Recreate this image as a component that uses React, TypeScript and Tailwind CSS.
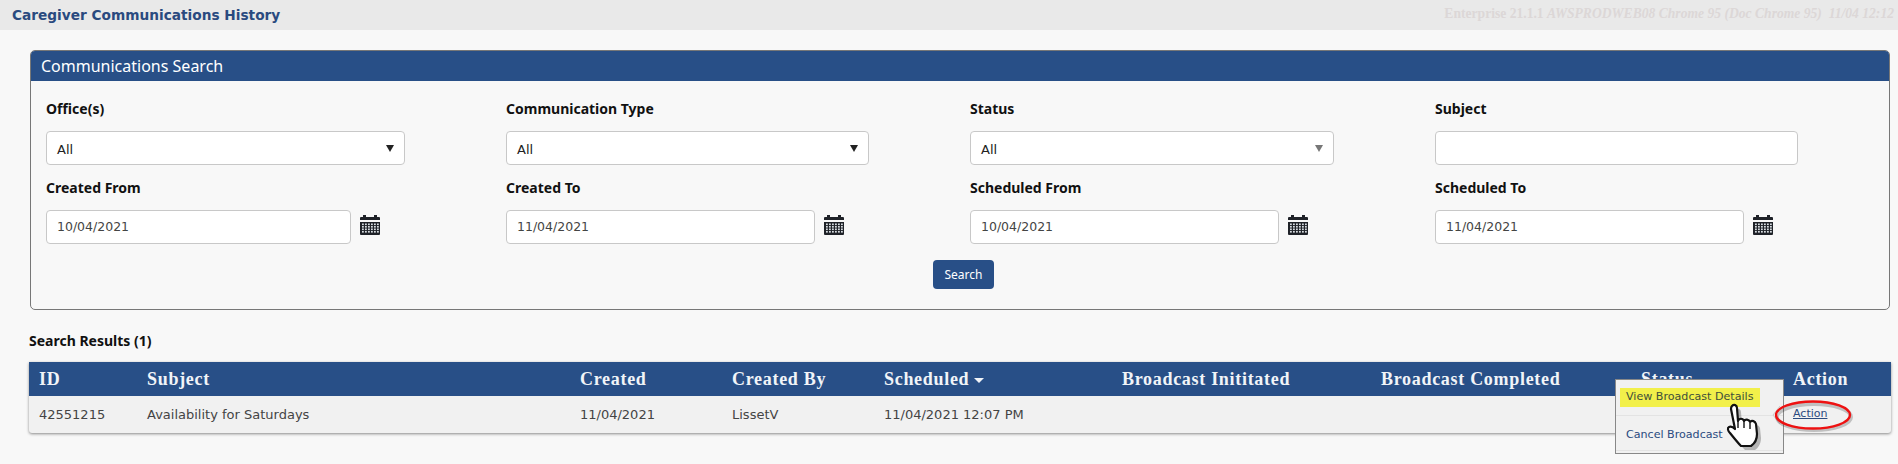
const bodyFont = "font-['DejaVu_Sans',sans-serif]";

const CalendarIcon = () => (
    <svg width="20" height="20" viewBox="0 0 20 20" className="ml-[9px] mt-[5px] shrink-0">
        <rect x="0" y="2" width="20" height="18" rx="1" fill="#1f2228" />
        <rect x="3" y="0" width="3" height="4" fill="#1f2228" />
        <rect x="14" y="0" width="3" height="4" fill="#1f2228" />
        <rect x="0" y="5" width="20" height="2" fill="#f8f8f8" />
        <g fill="#d8dde2">
            {[8.5, 11, 13.5, 16].map((y) =>
                [2, 5, 8, 11, 14, 17].map((x) => (
                    <rect key={`${x}-${y}`} x={x} y={y} width="1.8" height="1.6" />
                ))
            )}
        </g>
    </svg>
);

const Label = ({ text, className }: { text: string; className: string }) => (
    <div className={`font-['Noto_Sans',sans-serif] text-[14px] font-bold leading-[20px] text-[#111] ${className}`}>
        {text}
    </div>
);

const SelectBox = ({ width, arrowColor }: { width: string; arrowColor: string }) => (
    <div className={`flex h-[34px] items-center justify-between rounded-[4px] border border-[#c8c8c8] bg-white pl-[10px] pr-[10px] ${width}`}>
        <span className={`${bodyFont} pt-[3px] text-[13px] text-[#222]`}>All</span>
        <span className={`h-0 w-0 border-x-[4px] border-t-[7px] border-x-transparent ${arrowColor}`} />
    </div>
);

const DateBox = ({ value, width }: { value: string; width: string }) => (
    <div className="flex">
        <div className={`${bodyFont} flex h-[34px] items-center rounded-[4px] border border-[#c8c8c8] bg-white pl-[10px] text-[12.5px] text-[#444] ${width}`}>
            {value}
        </div>
        <CalendarIcon />
    </div>
);

const columns = [
    { title: "ID", width: "w-[108px]" },
    { title: "Subject", width: "w-[433px]" },
    { title: "Created", width: "w-[152px]" },
    { title: "Created By", width: "w-[152px]" },
    { title: "Scheduled", width: "w-[238px]", sorted: true },
    { title: "Broadcast Inititated", width: "w-[259px]" },
    { title: "Broadcast Completed", width: "w-[260px]" },
    { title: "Status", width: "w-[152px]" },
    { title: "Action", width: "" },
];

const rowCells = ["42551215", "Availability for Saturdays", "11/04/2021", "LissetV", "11/04/2021 12:07 PM", "", "", ""];

const HandCursor = () => (
    <svg width="44" height="50" viewBox="0 0 44 50" className="absolute left-[1722px] top-[403px]">
        <path
            d="M10 3c2-2 5-1 5 2l1 13c1-3 5-3 6 0 1-2 5-2 6 1 2-2 5-1 6 2l1 10c0 6-3 10-6 12H19c-3-3-7-8-11-13-2-2-3-5-1-6s4 0 6 2L9 6c0-1 0-2 1-3z"
            fill="#000"
            opacity="0.25"
            transform="translate(4 4)"
        />
        <path
            d="M10 3c2-2 5-1 5 2l1 13c1-3 5-3 6 0 1-2 5-2 6 1 2-2 5-1 6 2l1 10c0 6-3 10-6 12H19c-3-3-7-8-11-13-2-2-3-5-1-6s4 0 6 2L9 6c0-1 0-2 1-3z"
            fill="#fff"
            stroke="#111"
            strokeWidth="2.2"
            strokeLinejoin="round"
        />
        <path d="M16 18v7M22 18v7M28 20v6" stroke="#111" strokeWidth="1.4" fill="none" />
    </svg>
);

const App = () => {
    return (
        <div className="relative h-[464px] w-[1898px] overflow-hidden bg-[#f8f8f8]">
            <div className="flex h-[30px] items-center justify-between bg-[#e9e9e9] pl-[12px] pr-[4px]">
                <h1 className="font-['DejaVu_Sans',sans-serif] text-[13.7px] font-bold text-[#2a4a7f]">
                    Caregiver Communications History
                </h1>
                <div className="mb-[1px] whitespace-pre font-['Liberation_Serif',serif] text-[13.6px] font-bold text-[#dcd7d7]">
                    Enterprise 21.1.1 <span className="italic">AWSPRODWEB08 Chrome 95 (Doc Chrome 95)  11/04 12:12</span>
                </div>
            </div>

            <div className="ml-[30px] mt-[20px] h-[260px] w-[1860px] overflow-hidden rounded-[5px] border border-[#777]">
                <div className="flex h-[30px] items-center bg-[#284f87] pl-[10px] font-['Noto_Sans',sans-serif] text-[16px] text-white">
                    Communications Search
                </div>
                <div className="grid grid-cols-[460px_464px_465px_1fr] pl-[15px]">
                    <div>
                        <Label text="Office(s)" className="mt-[18px]" />
                        <div className="mt-[12px]"><SelectBox width="w-[359px]" arrowColor="border-t-[#222]" /></div>
                    </div>
                    <div>
                        <Label text="Communication Type" className="mt-[18px]" />
                        <div className="mt-[12px]"><SelectBox width="w-[363px]" arrowColor="border-t-[#222]" /></div>
                    </div>
                    <div>
                        <Label text="Status" className="mt-[18px]" />
                        <div className="mt-[12px]"><SelectBox width="w-[364px]" arrowColor="border-t-[#777]" /></div>
                    </div>
                    <div>
                        <Label text="Subject" className="mt-[18px]" />
                        <div className="mt-[12px] h-[34px] w-[363px] rounded-[4px] border border-[#c8c8c8] bg-white" />
                    </div>
                    <div>
                        <Label text="Created From" className="mt-[13px]" />
                        <div className="mt-[12px]"><DateBox value="10/04/2021" width="w-[305px]" /></div>
                    </div>
                    <div>
                        <Label text="Created To" className="mt-[13px]" />
                        <div className="mt-[12px]"><DateBox value="11/04/2021" width="w-[309px]" /></div>
                    </div>
                    <div>
                        <Label text="Scheduled From" className="mt-[13px]" />
                        <div className="mt-[12px]"><DateBox value="10/04/2021" width="w-[309px]" /></div>
                    </div>
                    <div>
                        <Label text="Scheduled To" className="mt-[13px]" />
                        <div className="mt-[12px]"><DateBox value="11/04/2021" width="w-[309px]" /></div>
                    </div>
                </div>
                <div className="ml-[902px] mt-[16px] flex h-[29px] w-[61px] items-center justify-center rounded-[4px] bg-[#284f87] font-['Noto_Sans',sans-serif] text-[12px] text-white">
                    Search
                </div>
            </div>

            <div className="ml-[29px] mt-[21px] font-['Noto_Sans',sans-serif] text-[14px] font-bold leading-[20px] text-[#111]">
                Search Results (1)
            </div>

            <table className="ml-[29px] mt-[11px] w-[1862px] table-fixed rounded-b-[3px] bg-[#f1f1f1] shadow-[0_1px_3px_rgba(0,0,0,0.45)]">
                <thead>
                    <tr className="h-[34px] bg-[#284f87]">
                        {columns.map((col) => (
                            <th
                                key={col.title}
                                className={`${col.width} pl-[10px] pt-[1px] text-left font-['Liberation_Serif',serif] text-[18px] font-bold tracking-[0.7px] text-[#f1f4f8]`}
                            >
                                {col.title}
                                {col.sorted && (
                                    <span className="mb-[2px] ml-[5px] inline-block h-0 w-0 border-x-[5px] border-t-[5px] border-x-transparent border-t-[#f1f4f8]" />
                                )}
                            </th>
                        ))}
                    </tr>
                </thead>
                <tbody>
                    <tr className="h-[37px]">
                        {rowCells.map((cell, i) => (
                            <td key={i} className={`${bodyFont} pl-[10px] pt-[1px] text-[13px] text-[#444]`}>
                                {cell}
                            </td>
                        ))}
                        <td className={`${bodyFont} pl-[10px] text-[11px] text-[#2a4a7f] underline`}>Action</td>
                    </tr>
                </tbody>
            </table>

            <div className={`${bodyFont} absolute left-[1615px] top-[379px] h-[75px] w-[169px] whitespace-nowrap border border-[#888] bg-[#f1f1f1] text-[11.1px] text-[#2a4a7f] underline`}>
                <div className="absolute left-[4px] top-[8px] flex h-[19px] w-[140px] items-center bg-[#f2f04a] pl-[6px] text-[#3f4f3a]">
                    View Broadcast Details
                </div>
                <div className="absolute left-0 top-[35px] h-[1px] w-full bg-[#e3e3e3]" />
                <div className="absolute left-[10px] top-[47px]">Cancel Broadcast</div>
                <div className="absolute bottom-[2px] left-0 h-[1px] w-full bg-[#e3e3e3]" />
            </div>

            <svg width="94" height="44" viewBox="0 0 94 44" className="absolute left-[1768px] top-[394px]">
                <path d="M12 12 L5 21 L12 30" fill="#f8f8f8" stroke="#c9c9c9" strokeWidth="1" />
                <ellipse cx="46" cy="23" rx="37" ry="13" fill="none" stroke="#000" strokeOpacity="0.2" strokeWidth="4" />
                <ellipse cx="45" cy="21" rx="37" ry="13.5" fill="none" stroke="#ee1111" strokeWidth="2.4" />
            </svg>

            <HandCursor />
        </div>
    );
};

export default App;
